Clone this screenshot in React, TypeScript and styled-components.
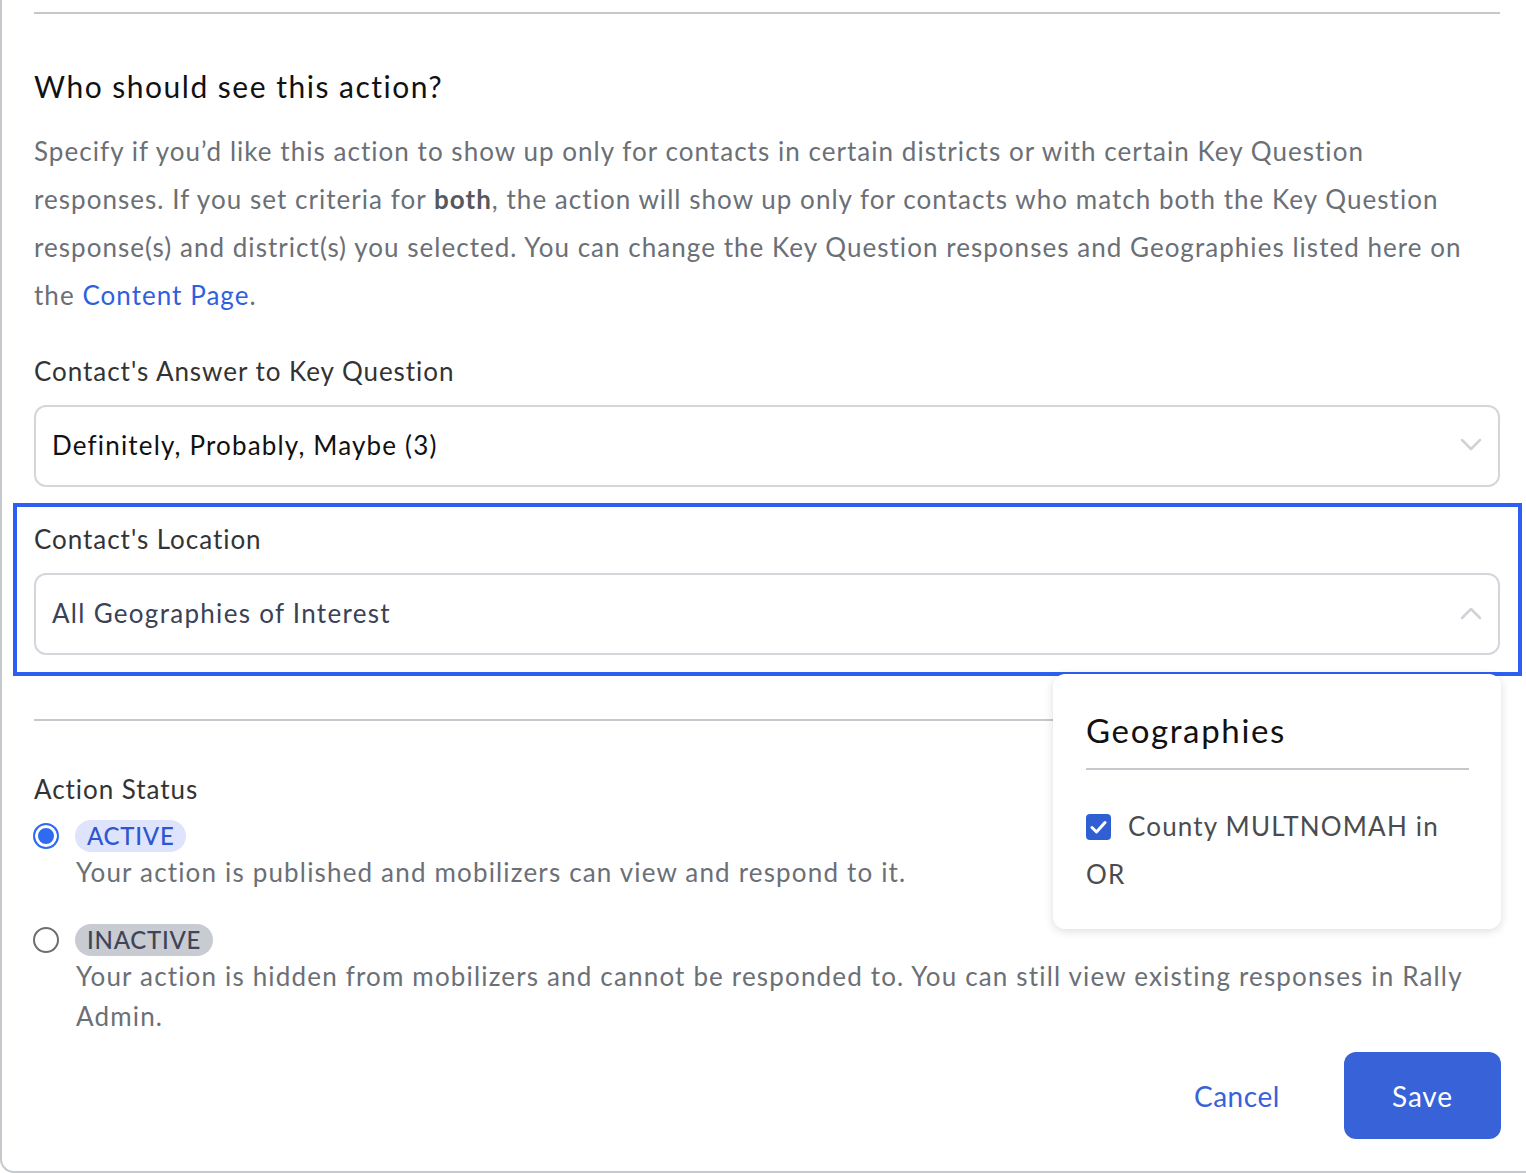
import React from 'react';
import styled, { createGlobalStyle } from 'styled-components';

// --- Settings ---------------------------------------------------------------
const FONT = '"Lato", "Noto Sans", "Liberation Sans", sans-serif';
const TRACK = '0.06em';
const BLUE = '#3862d8';
const LINE = '#c5c8cc';

const GlobalStyle = createGlobalStyle`
  html, body {
    margin: 0;
    padding: 0;
    background: #ffffff;
    overflow: hidden;
  }
  body {
    font-family: ${FONT};
    letter-spacing: ${TRACK};
    -webkit-font-smoothing: antialiased;
  }
  * { box-sizing: border-box; }
`;

// --- Layout -----------------------------------------------------------------
const Modal = styled.div`
  height: 1173px;
  border-left: 2px solid ${LINE};
  border-bottom: 2px solid ${LINE};
  border-bottom-left-radius: 14px;
  padding: 12px 26px 0 32px;
`;

const Divider = styled.hr<{ $top?: number }>`
  margin: ${(p) => p.$top ?? 0}px 0 0;
  width: 100%;
  border: none;
  height: 2px;
  background: ${LINE};
`;

const Heading = styled.h2`
  margin: 54px 0 0;
  font-size: 30px;
  line-height: 36px;
  font-weight: 400;
  letter-spacing: 0.05em;
  color: #111111;
`;

const Description = styled.p`
  margin: 23px 0 0;
  font-size: 26px;
  line-height: 48px;
  letter-spacing: 0.04em;
  color: #6b6f76;

  b {
    font-weight: 700;
    color: #55585e;
  }
`;

const Link = styled.a`
  color: #2f5fe0;
  text-decoration: none;
`;

const Label = styled.div<{ $top?: number }>`
  margin-top: ${(p) => p.$top ?? 0}px;
  font-size: 26px;
  line-height: 36px;
  color: #333333;
`;

const SelectWrap = styled.div`
  position: relative;
`;

const SelectBox = styled.div<{ $muted?: boolean }>`
  margin-top: 16px;
  height: 82px;
  border: 2px solid #d3d6da;
  border-radius: 12px;
  display: flex;
  align-items: center;
  justify-content: space-between;
  padding: 0 16px 2px 16px;
  font-size: 26px;
  letter-spacing: ${(p) => (p.$muted ? '0.05em' : '0.045em')};
  color: ${(p) => (p.$muted ? '#3a4256' : '#111111')};
`;

const Highlight = styled.div`
  margin: 16px -22px 0 -21px;
  border: 4px solid #2d5ff0;
  padding: 14px 18px 17px 17px;
`;

// --- Dropdown ---------------------------------------------------------------
const Popover = styled.div`
  position: absolute;
  top: calc(100% + 19px);
  right: -1px;
  width: 448px;
  background: #ffffff;
  border-radius: 12px;
  box-shadow: 0 2px 10px rgba(0, 0, 0, 0.14);
  padding: 36px 32px 31px 33px;
  z-index: 2;
`;

const PopoverTitle = styled.div`
  font-size: 33px;
  line-height: 40px;
  letter-spacing: 0.05em;
  color: #111111;
  padding-bottom: 18px;
  border-bottom: 2px solid ${LINE};
`;

const Option = styled.div`
  margin-top: 32px;
  font-size: 26px;
  line-height: 48px;
  letter-spacing: 0.045em;
  color: #4a4c50;
`;

const Check = styled.span`
  display: inline-flex;
  align-items: center;
  justify-content: center;
  width: 25px;
  height: 26px;
  margin-right: 17px;
  vertical-align: 2px;
  background: #2f5fd3;
  border-radius: 4px;
`;

// --- Status -----------------------------------------------------------------
const StatusRow = styled.div<{ $top: number }>`
  margin-top: ${(p) => p.$top}px;
  display: grid;
  grid-template-columns: 26px 1fr;
  column-gap: 16px;
  margin-left: -1px;
`;

const Radio = styled.span<{ $on?: boolean }>`
  margin-top: 3px;
  width: 26px;
  height: 26px;
  border-radius: 50%;
  border: 2px solid ${(p) => (p.$on ? '#2f6bf0' : '#6e6e6e')};
  background: ${(p) => (p.$on ? '#2f6bf0' : '#ffffff')};
  box-shadow: ${(p) => (p.$on ? 'inset 0 0 0 3px #ffffff' : 'none')};
`;

const Pill = styled.span<{ $on?: boolean }>`
  display: inline-flex;
  align-items: center;
  height: 32px;
  padding: 0 12px 1px;
  border-radius: 16px;
  font-size: 24px;
  font-weight: 500;
  letter-spacing: 0.03em;
  background: ${(p) => (p.$on ? '#dde4fb' : '#c8cbd1')};
  color: ${(p) => (p.$on ? '#2f55d0' : '#3f4456')};
  justify-self: start;
`;

const StatusText = styled.div`
  grid-column: 2;
  font-size: 26px;
  line-height: 40px;
  letter-spacing: 0.045em;
  color: #6b6f76;
  padding-left: 1px;
`;

// --- Footer -----------------------------------------------------------------
const Footer = styled.div`
  margin-top: 16px;
  display: flex;
  justify-content: flex-end;
  align-items: center;
  gap: 64px;
`;

const CancelButton = styled.button`
  border: none;
  background: none;
  padding: 0;
  font-family: ${FONT};
  font-size: 28px;
  letter-spacing: 0.02em;
  color: ${BLUE};
  cursor: pointer;
`;

const SaveButton = styled.button`
  width: 157px;
  height: 87px;
  margin-right: -1px;
  border: none;
  border-radius: 12px;
  background: ${BLUE};
  color: #ffffff;
  font-family: ${FONT};
  font-size: 28px;
  letter-spacing: 0.03em;
  cursor: pointer;
`;

function Chevron({ up }: { up?: boolean }) {
  return (
    <svg width="22" height="14" viewBox="0 0 22 14" fill="none">
      <path
        d={up ? 'M2 12 L11 3 L20 12' : 'M2 2 L11 11 L20 2'}
        stroke="#cfd2d7"
        strokeWidth="2.5"
        strokeLinecap="round"
        strokeLinejoin="round"
      />
    </svg>
  );
}

export default function App() {
  return (
    <>
      <GlobalStyle />
      <Modal>
        <Divider />
        <Heading>Who should see this action?</Heading>
        <Description>
          Specify if you’d like this action to show up only for contacts in certain districts or
          with certain Key Question
          <br />
          responses. If you set criteria for <b>both</b>, the action will show up only for contacts
          who match both the Key Question
          <br />
          response(s) and district(s) you selected. You can change the Key Question responses and
          Geographies listed here on
          <br />
          the <Link href="#">Content Page</Link>.
        </Description>

        <Label $top={34}>Contact's Answer to Key Question</Label>
        <SelectBox>
          Definitely, Probably, Maybe (3)
          <Chevron />
        </SelectBox>

        <Highlight>
          <Label>Contact's Location</Label>
          <SelectWrap>
            <SelectBox $muted>
              All Geographies of Interest
              <Chevron up />
            </SelectBox>
            <Popover>
              <PopoverTitle>Geographies</PopoverTitle>
              <Option>
                <Check>
                  <svg width="17" height="14" viewBox="0 0 17 14" fill="none">
                    <path
                      d="M2 7.5 L6.5 12 L15 2.5"
                      stroke="#ffffff"
                      strokeWidth="3"
                      strokeLinecap="round"
                      strokeLinejoin="round"
                    />
                  </svg>
                </Check>
                County MULTNOMAH in OR
              </Option>
            </Popover>
          </SelectWrap>
        </Highlight>

        <Divider $top={43} />

        <Label $top={50}>Action Status</Label>
        <StatusRow $top={13}>
          <Radio $on />
          <Pill $on>ACTIVE</Pill>
          <StatusText>Your action is published and mobilizers can view and respond to it.</StatusText>
        </StatusRow>
        <StatusRow $top={32}>
          <Radio />
          <Pill>INACTIVE</Pill>
          <StatusText>
            Your action is hidden from mobilizers and cannot be responded to. You can still view
            existing responses in Rally Admin.
          </StatusText>
        </StatusRow>

        <Footer>
          <CancelButton>Cancel</CancelButton>
          <SaveButton>Save</SaveButton>
        </Footer>
      </Modal>
    </>
  );
}
